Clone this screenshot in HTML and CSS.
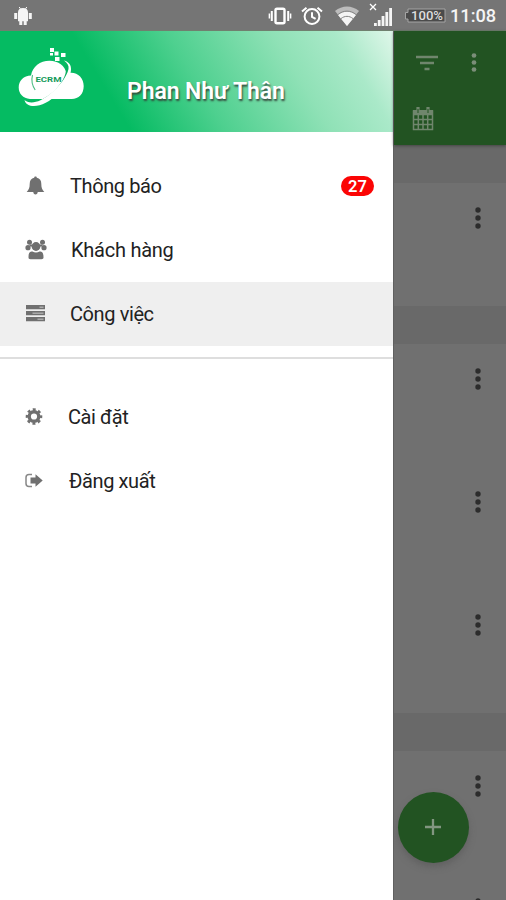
FILE: index.html
```html
<!DOCTYPE html>
<html lang="vi">
<head>
<meta charset="utf-8">
<title>ECRM</title>
<link rel="stylesheet" href="styles.css">
</head>
<body>
<svg class="defs" width="0" height="0">
  <defs>
    <symbol id="dots" viewBox="0 0 8 24"><circle cx="4" cy="4" r="2.700"/><circle cx="4" cy="12" r="2.700"/><circle cx="4" cy="20" r="2.700"/></symbol>
  </defs>
</svg>
<div class="phone">
  <header class="status">
    <svg class="droid" width="20" height="20" viewBox="0 0 20 20"><path d="M6.200 1l1.200 1.700M13.800 1l-1.200 1.700" stroke="#fff"/><path d="M5 6.200C5 3.500 7 2 10 2s5 1.500 5 4.200zM5 6.200h10v9H5zM1.200 7h3v6h-3zM15.800 7h3v6h-3zM6.300 14h3v5h-3zM10.700 14h3v5h-3z"/></svg>
    <div class="status-icons">
      <svg width="24" height="20" viewBox="0 0 24 20"><rect x="7.500" y="2.800" width="9" height="14.400" rx="1.500" fill="none" stroke="#fff" stroke-width="2.400"/><path d="M3.800 5v10M20.200 5v10" stroke="#fff" stroke-width="2"/><path d="M1.400 7.500v5M22.600 7.500v5" stroke="#fff" stroke-width="1.500"/></svg>
      <svg class="alarm" width="24" height="20" viewBox="0 0 24 20"><circle cx="12" cy="10.500" r="7.400" fill="none" stroke="#fff" stroke-width="2"/><path d="M2 5.500L6.500 1.700M22 5.500l-4.500-3.800M12 6.300v4.600l3.600 2" fill="none" stroke="#fff" stroke-width="2"/></svg>
      <svg class="wifi" width="24" height="20" viewBox="0 0 24 20"><path d="M0 5C7-1 17-1 24 5L12 20z" opacity=".55"/><path d="M3 9c5.300-4.500 12.700-4.500 18 0L12 20z"/><path d="M3 8.500c5.300-4.500 12.700-4.500 18 0M6 12.600c3.600-3 8.400-3 12 0" fill="none" stroke="#858585" stroke-width="1"/></svg>
      <svg class="signal" width="26" height="25" viewBox="0 0 26 25"><path d="M2 2l6 6M8 2L2 8" stroke="#fff" stroke-width="1.300"/><path d="M6 21h2.800v3H6zM9.800 18h2.800v6H9.800zM13.600 14h2.800v10h-2.800zM17.400 10h2.800v14h-2.800zM21.200 6H24v18h-2.800z"/></svg>
      <svg class="battery" width="43" height="17" viewBox="0 0 43 17"><path d="M4 2h37v13H4v-3H1.500V5.500H4z" fill="#4b4b4b" stroke="#a5a5a5"/><text x="7" y="13" textLength="32" lengthAdjust="spacingAndGlyphs">100%</text></svg>
    </div>
    <span class="clock">11:08</span>
  </header>
  <main class="body">
    <nav class="drawer">
      <div class="profile">
        <svg class="logo" width="68" height="62" viewBox="0 0 68 62">
          <path d="M12 53C5 52.500 .7 47.500 .7 41.500c0-7 5-12 12.300-12C14.500 20.500 22 14.700 31.500 14.700c9 0 15.500 4.800 17 12.800C58 24.500 65.700 31 65.700 40c0 8-5 13-12 13z"/>
          <path d="M48 19c3 8-2 17-11 26.500C29 53 20 58 10 56" fill="none" stroke="#08b060" stroke-width="1.800"/>
          <path d="M46 14.500c4.500 1 7.500 4.500 7 9.500-.6 7-5 15-12 22.500C32 56 23 60 16 60c-5 0-8.500-2-9.500-6 3 3 9.500 3.300 16 .3C35 48 48.500 33 50.500 23c.6-3.500-1-6-4.500-8.500z"/>
          <path d="M14.500 29c-1.500 6 0 11 2.700 15" fill="none" stroke="#4bbd83" stroke-width="1.100"/>
          <path d="M32 2h4v4h-4zM36.500 5.500h4v4h-4zM43 7h4.500v4H43zM37 11h4.500v4H37zM32 7h3v2.500h-3z"/>
          <text x="17.500" y="36.300" textLength="26" lengthAdjust="spacingAndGlyphs">ECRM</text>
        </svg>
        <h1 class="name">Phan Như Thân</h1>
      </div>
      <ul class="menu">
        <li class="item">
          <svg class="icon" width="22" height="22" viewBox="0 0 22 22"><path d="M10.500 1.500c.8 0 1.300.5 1.300 1.300 3 .6 4.500 2.900 4.500 6 0 4 .8 6 3 8.200H1.700c2.200-2.200 3-4.200 3-8.200 0-3.100 1.500-5.400 4.500-6 0-.8.500-1.300 1.300-1.300zM8.300 17h4.400c0 1.500-.9 2.500-2.200 2.500s-2.200-1-2.200-2.500z"/></svg>
          <span class="label notice">Thông báo</span><span class="badge">27</span>
        </li>
        <li class="item">
          <svg class="icon" width="22" height="22" viewBox="0 0 22 22"><circle cx="4.500" cy="3.200" r="2.500"/><circle cx="17.500" cy="3.200" r="2.500"/><circle cx="3" cy="8.700" r="2.600"/><circle cx="19" cy="8.700" r="2.600"/><circle cx="11" cy="7.500" r="4.400"/><path d="M4.500 6.500h4M13.500 6.500h4" stroke="#707070" stroke-width="2"/><path d="M3.500 18.500c0-4.500 1-6 4-6 2 1.300 5 1.300 7 0 3 0 4 1.500 4 6 0 1.200-.7 1.700-2 1.700h-11c-1.300 0-2-.5-2-1.700z"/></svg>
          <span class="label client">Khách hàng</span>
        </li>
        <li class="item active">
          <svg class="icon" width="22" height="22" viewBox="0 0 22 22"><path d="M1 2h19v4.300H1zM1 8h19v4.300H1zM1 14h19v4.300H1z"/><path d="M14.500 4.200h4M7.500 10.200h11M12.500 16.200h6" stroke="#aaa" stroke-width="1.400"/></svg>
          <span class="label work">Công việc</span>
        </li>
      </ul>
      <ul class="menu extra">
        <li class="item">
          <svg class="icon" width="22" height="22" viewBox="0 0 22 22"><circle cx="9" cy="10.500" r="4.800" fill="none" stroke="#707070" stroke-width="3.400"/><circle cx="9" cy="10.500" r="7" fill="none" stroke="#707070" stroke-width="2.600" stroke-dasharray="2.900 2.600" stroke-dashoffset="1.450"/></svg>
          <span class="label settings">Cài đặt</span>
        </li>
        <li class="item">
          <svg class="icon" width="22" height="22" viewBox="0 0 22 22"><path d="M7 4.500H4C2 4.500 1 5.500 1 7.500v6c0 2 1 3 3 3h3" fill="none" stroke="#888" stroke-width="1.500"/><path d="M5.500 7.500h5V4.200l7.200 6.300-7.200 6.300v-3.300h-5z"/></svg>
          <span class="label logout">Đăng xuất</span>
        </li>
      </ul>
    </nav>
    <section class="page">
      <div class="toolbar">
        <div class="actions">
          <svg width="22" height="16" viewBox="0 0 22 16"><path d="M0 2h22M4 8h14M8.500 14h5" stroke="#70866d" stroke-width="2.500"/></svg>
          <svg class="dots light" width="8" height="21"><use href="#dots"/></svg>
        </div>
        <svg class="calendar" width="22" height="25" viewBox="0 0 22 25"><path d="M1.500 5h19v18.500h-19zM1.500 8.500h19M1.500 13.500h19M1.500 18.500h19M6.300 8v15M11 8v15M15.700 8v15" fill="none" stroke="#70866d" stroke-width="1.500"/><path d="M1 4h20v5H1z" fill="#70866d"/><path d="M6 1v6M16 1v6" stroke="#70866d" stroke-width="3.200"/><path d="M6 3v4M16 3v4" stroke="#225322" stroke-width="1"/></svg>
      </div>
      <div class="band"></div>
      <div class="row"><svg class="dots" width="8" height="24"><use href="#dots"/></svg></div>
      <div class="band"></div>
      <div class="row"><svg class="dots" width="8" height="24"><use href="#dots"/></svg></div>
      <div class="row"><svg class="dots" width="8" height="24"><use href="#dots"/></svg></div>
      <div class="row"><svg class="dots" width="8" height="24"><use href="#dots"/></svg></div>
      <div class="band"></div>
      <div class="row"><svg class="dots" width="8" height="24"><use href="#dots"/></svg></div>
      <div class="row"><svg class="dots" width="8" height="24"><use href="#dots"/></svg></div>
      <div class="fab"><svg width="16" height="18" viewBox="0 0 16 18"><path d="M8 1v16M0 9h16" stroke="#829681" stroke-width="2.300"/></svg></div>
    </section>
  </main>
</div>
</body>
</html>
```

FILE: styles.css
```css
* { box-sizing: border-box; }
body { margin: 0; font-family: Roboto, "Noto Sans", sans-serif; }
svg { display: block; flex: none; }
.defs { position: absolute; }
.phone { width: 506px; height: 900px; overflow: hidden; display: flex; flex-direction: column; }
.status { height: 31px; flex: none; background: #757575; display: flex; align-items: center; padding: 1px 10px 0 13px; fill: #f5f5f5; border-bottom: 1px solid #70806f; }
.status-icons { margin-left: auto; display: flex; align-items: center; }
.alarm { margin-left: 8px; }
.wifi { margin-left: 11px; }
.signal { margin-left: 9px; margin-top: -3px; }
.battery { margin-left: 10px; }
.battery text { font-size: 13px; font-weight: 500; fill: #ddd; }
.clock { width: 46px; margin-left: 3px; color: #f5f5f5; font-size: 18.200px; font-weight: 500; line-height: 32px; white-space: nowrap; }
.body { flex: 1; min-height: 0; display: flex; }
.drawer { width: 393px; flex: none; background: #fff; }
.profile { height: 101px; display: flex; padding: 15px 0 0 18px; background: linear-gradient(59deg, #05bb62 0%, #05bb62 29%, #4ed08f 50%, #8fe1b6 73%, #aae9c9 87%, #e0f7ea 100%); }
.logo { fill: #fff; }
.logo text { font-size: 8px; font-weight: 700; fill: #159b5c; }
.name { margin: 31px 0 0 41px; color: #fff; font-size: 23px; letter-spacing: -0.1px; line-height: 30px; font-weight: 600; text-shadow: 1px 2px 2px #344a3d; white-space: nowrap; }
.menu { list-style: none; margin: 0; padding: 22px 0 11px; }
.extra { border-top: 2px solid #dedede; padding-top: 26px; }
.item { height: 64px; display: flex; align-items: center; padding-left: 25px; padding-right: 19px; }
.active { background: #efefef; }
.icon { fill: #707070; }
.label { color: #222; font-size: 20px; letter-spacing: -0.4px; line-height: 28px; margin-left: 23px; white-space: nowrap; }
.client { margin-left: 24px; letter-spacing: -0.25px; }
.settings { margin-left: 21px; }
.logout { margin-left: 22px; }
.badge { width: 33px; height: 20px; margin-left: auto; border-radius: 10px; background: #fb0505; color: #fff; font-size: 16.500px; font-weight: 600; line-height: 21px; text-align: center; }
.page { flex: 1; position: relative; background: #707070; border-left: 1px solid #606060; }
.toolbar { height: 114px; background: #225322; padding: 21px 28px 0 22px; box-shadow: 0 1px 3px #444; position: relative; }
.actions { display: flex; justify-content: space-between; align-items: center; }
.calendar { margin: 33px 0 0 -4px; }
.dots { fill: #2c2c2c; }
.light { fill: #7b8e79; }
.band { height: 38px; background: #696969; }
.row { height: 123px; display: flex; justify-content: flex-end; padding: 23px 24px 0 0; }
.fab { position: absolute; left: 4px; top: 761px; width: 71px; height: 71px; border-radius: 50%; background: #225322; display: flex; align-items: center; justify-content: center; padding: 0 1px 2px 0; box-shadow: 0 4px 6px #5558; }
```
